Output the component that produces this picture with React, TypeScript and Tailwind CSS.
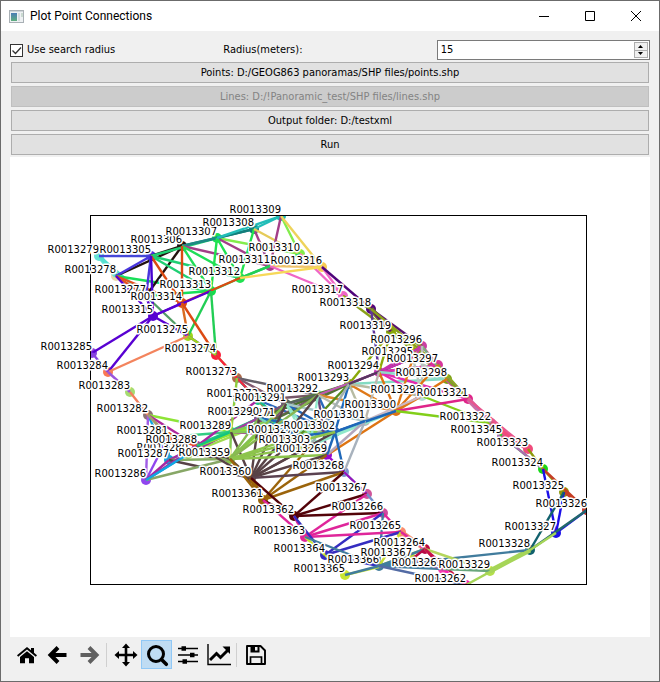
import { useState } from "react";
import type { ReactNode } from "react";

// id: [x, y, colour]
const points: Record<string, [number, number, string]> = {
  "262": [466, 585, "#fb1fb4"],
  "263": [443, 569, "#f73fb0"],
  "264": [425, 549, "#b80a45"],
  "265": [401, 532, "#f98a70"],
  "266": [383, 513, "#cf4a9e"],
  "267": [367, 494, "#cf559b"],
  "268": [344, 472, "#7a8fd0"],
  "269": [327, 455, "#9a09cf"],
  "270": [299, 436, "#1690dd"],
  "271": [275, 419, "#22c4a8"],
  "272": [258, 400, "#16c487"],
  "273": [237, 378, "#ad6b4b"],
  "274": [216, 355, "#fb1f3b"],
  "275": [188, 336, "#9ed61c"],
  "277": [146, 296, "#f26a3c"],
  "278": [116, 276, "#e6d9a8"],
  "279": [99, 256, "#67e3d6"],
  "280": [188, 454, "#a9d86a"],
  "281": [168, 437, "#e04a1b"],
  "282": [148, 415, "#8c7474"],
  "283": [130, 392, "#a5dc70"],
  "284": [108, 372, "#fa7954"],
  "285": [92, 353, "#8745e0"],
  "286": [146, 480, "#9046ee"],
  "287": [169, 460, "#11a6e2"],
  "288": [197, 446, "#b029a4"],
  "289": [231, 432, "#20ca86"],
  "290": [259, 418, "#7b5772"],
  "291": [286, 404, "#55635f"],
  "292": [318, 395, "#8ee8cc"],
  "293": [349, 384, "#73a317"],
  "294": [379, 372, "#c633b0"],
  "295": [413, 358, "#9fa8b0"],
  "296": [422, 346, "#cb3fa3"],
  "297": [438, 365, "#d8369b"],
  "298": [447, 379, "#7da018"],
  "299": [422, 396, "#b3ded6"],
  "300": [396, 411, "#de7412"],
  "301": [365, 421, "#b6b6b6"],
  "302": [335, 432, "#1e67b9"],
  "303": [310, 446, "#91e8cb"],
  "305": [151, 256, "#4936de"],
  "306": [182, 246, "#22110f"],
  "307": [217, 238, "#18df58"],
  "308": [254, 229, "#137e7b"],
  "309": [281, 216, "#22bdb8"],
  "310": [300, 254, "#83ed4c"],
  "311": [270, 266, "#a93f87"],
  "312": [240, 278, "#20e250"],
  "313": [211, 291, "#12df4b"],
  "314": [182, 303, "#dc4a12"],
  "315": [153, 316, "#5801d2"],
  "316": [322, 267, "#f6cb55"],
  "317": [343, 296, "#ef66c6"],
  "318": [371, 309, "#4f047b"],
  "319": [391, 332, "#8aa908"],
  "321": [468, 399, "#df2489"],
  "322": [491, 423, "#b37ab2"],
  "345": [502, 436, "#a96cb0"],
  "323": [528, 449, "#f04b7c"],
  "324": [543, 469, "#15d916"],
  "325": [564, 492, "#8e990b"],
  "326": [587, 510, "#c53c24"],
  "327": [556, 533, "#1b0fe8"],
  "328": [530, 550, "#11616d"],
  "329": [490, 571, "#b4df4c"],
  "359": [230, 459, "#89c64b"],
  "360": [251, 478, "#584246"],
  "361": [263, 500, "#9b640b"],
  "362": [294, 516, "#530309"],
  "363": [305, 537, "#df269a"],
  "364": [325, 555, "#352dc0"],
  "365": [345, 575, "#c9e632"],
  "366": [379, 566, "#417c9d"],
  "367": [412, 559, "#b9dc2d"],
};

// from, colour, destinations
const links: [string, string, string][] = [
  ["279", "#55dfd0", "278 277"],
  ["279", "#4547d8", "305"],
  ["278", "#22110f", "306"],
  ["278", "#4936de", "305"],
  ["278", "#18df58", "313"],
  ["278", "#e2521f", "277 314"],
  ["278", "#5801d2", "315"],
  ["277", "#22110f", "306"],
  ["277", "#4936de", "305"],
  ["277", "#18df58", "313"],
  ["277", "#519e66", "275"],
  ["277", "#5801d2", "315"],
  ["305", "#22110f", "306"],
  ["305", "#20cf73", "307 312 313"],
  ["305", "#dc4a12", "314"],
  ["305", "#4801d2", "315"],
  ["306", "#1d8a83", "307 308"],
  ["306", "#a33e88", "311"],
  ["306", "#20dd58", "312 313"],
  ["306", "#dc4a12", "314"],
  ["307", "#83ed4c", "310"],
  ["307", "#a33e88", "311"],
  ["307", "#20e250", "312 313"],
  ["307", "#137e7b", "308"],
  ["307", "#22bdb8", "309"],
  ["308", "#22bdb8", "309"],
  ["308", "#a33e88", "311"],
  ["308", "#20e250", "312"],
  ["308", "#e5cb59", "310"],
  ["309", "#83ed4c", "310"],
  ["309", "#a33e88", "311"],
  ["309", "#eed35a", "316"],
  ["310", "#20dd60", "312"],
  ["310", "#eed35a", "316"],
  ["310", "#ef66c6", "317"],
  ["311", "#22ce55", "312"],
  ["311", "#f0c36b", "316"],
  ["311", "#ef66c6", "317"],
  ["312", "#20dd60", "313"],
  ["312", "#f6d858", "316"],
  ["312", "#dc4a12", "314"],
  ["313", "#5801d2", "315"],
  ["313", "#22ce55", "275 274"],
  ["314", "#5801d2", "315"],
  ["314", "#d86b21", "275"],
  ["314", "#dc4a12", "274"],
  ["315", "#5801d2", "285 284 275"],
  ["316", "#ef66c6", "317"],
  ["316", "#4f047b", "318"],
  ["317", "#8aa119", "318 319"],
  ["318", "#58126f", "319 296"],
  ["318", "#60349b", "294"],
  ["318", "#8aa119", "297"],
  ["319", "#8aa908", "293 294 298 296 297"],
  ["275", "#6014c7", "274"],
  ["275", "#f3845d", "284"],
  ["275", "#9ed61c", "274"],
  ["274", "#87d52e", "273"],
  ["274", "#fb1f3b", "273"],
  ["285", "#8745e0", "284"],
  ["284", "#9a56dc", "283"],
  ["283", "#f37f5c", "282"],
  ["282", "#8ee436", "289"],
  ["282", "#af279d", "288"],
  ["282", "#11a6e2", "287"],
  ["282", "#a05ce5", "286"],
  ["282", "#a59b6d", "280 281"],
  ["281", "#31cd84", "289"],
  ["281", "#eb4925", "288"],
  ["281", "#1ba4d8", "287"],
  ["281", "#9046ee", "286"],
  ["280", "#a0db50", "271 289 359"],
  ["280", "#a727a2", "290"],
  ["280", "#11a6e2", "286"],
  ["280", "#584246", "359"],
  ["287", "#25ca80", "289"],
  ["287", "#a727a2", "288"],
  ["287", "#86ae62", "359"],
  ["287", "#584246", "360"],
  ["286", "#a727a2", "288 287"],
  ["286", "#87a766", "359"],
  ["286", "#11a6e2", "280"],
  ["288", "#25ca80", "289 290"],
  ["288", "#a727a2", "272"],
  ["288", "#93e52c", "271"],
  ["288", "#584246", "359 360"],
  ["289", "#13c57f", "290 291 288"],
  ["289", "#aa39a1", "270 291"],
  ["289", "#84cb54", "271 302 359"],
  ["289", "#584246", "360"],
  ["273", "#646069", "292"],
  ["273", "#825a70", "291"],
  ["273", "#18c68e", "272 271"],
  ["273", "#f32744", "272"],
  ["273", "#8fce3e", "289"],
  ["272", "#fa7030", "271"],
  ["272", "#2869bc", "302"],
  ["272", "#18ba88", "270"],
  ["272", "#755768", "292"],
  ["271", "#87d62f", "359"],
  ["271", "#1a83d1", "270 302"],
  ["271", "#7c5570", "291 292"],
  ["271", "#91e8cb", "303"],
  ["271", "#54703a", "293"],
  ["290", "#7c5572", "291 292"],
  ["290", "#49722b", "293"],
  ["290", "#1e67b9", "270 302"],
  ["290", "#86ba50", "359"],
  ["290", "#584246", "360"],
  ["290", "#75d2c0", "303"],
  ["291", "#4e842c", "293"],
  ["291", "#586361", "292"],
  ["291", "#1e67b9", "302"],
  ["291", "#a6c7c7", "301"],
  ["291", "#91e8cb", "303 269"],
  ["291", "#86c050", "359"],
  ["291", "#584246", "360"],
  ["292", "#4c7c20", "293"],
  ["292", "#bf5ab3", "294"],
  ["292", "#2869bc", "302"],
  ["292", "#694678", "269"],
  ["292", "#df8928", "300"],
  ["292", "#b7bbae", "301"],
  ["292", "#91e8cb", "303"],
  ["292", "#89b652", "359"],
  ["292", "#584246", "360"],
  ["293", "#9b32a0", "294 295"],
  ["293", "#83dbc2", "298"],
  ["293", "#df7918", "300"],
  ["293", "#b7bba2", "301 299"],
  ["293", "#1e67b9", "302"],
  ["293", "#598d20", "270"],
  ["293", "#a1afb1", "303"],
  ["293", "#56395e", "295"],
  ["294", "#c633b0", "295 296"],
  ["294", "#344f78", "297"],
  ["294", "#e22bae", "297 321 299"],
  ["294", "#8cdac8", "298"],
  ["294", "#de7412", "300"],
  ["294", "#bbb8ae", "301"],
  ["295", "#cb3fa3", "296"],
  ["295", "#df7918", "300"],
  ["295", "#b9c9c0", "299 298"],
  ["295", "#df2995", "297"],
  ["296", "#df2995", "297"],
  ["296", "#79ae7e", "298"],
  ["296", "#b9c0bd", "299"],
  ["297", "#8bac22", "298 321"],
  ["297", "#de7412", "300"],
  ["298", "#df2995", "321"],
  ["298", "#7ca71f", "321"],
  ["298", "#de7412", "300"],
  ["299", "#df7918", "300"],
  ["299", "#ccb8c4", "301"],
  ["299", "#82cf19", "322"],
  ["300", "#df2489", "321"],
  ["300", "#82cf19", "322"],
  ["300", "#bababa", "301 302"],
  ["300", "#91e8cb", "303"],
  ["300", "#de7412", "269"],
  ["300", "#1e67b9", "302"],
  ["301", "#a8b2bd", "268"],
  ["301", "#b3a5bc", "269"],
  ["301", "#91e8cb", "303"],
  ["301", "#1e67b9", "302"],
  ["302", "#1e67b9", "268 269 270"],
  ["302", "#91e8cb", "303"],
  ["302", "#584246", "360"],
  ["302", "#8dc44c", "359"],
  ["270", "#8dc44c", "359"],
  ["270", "#584246", "360"],
  ["270", "#69caa5", "303"],
  ["303", "#584246", "360"],
  ["303", "#8dc44c", "359"],
  ["303", "#9b640b", "361"],
  ["269", "#8dc44c", "359"],
  ["269", "#584246", "360"],
  ["269", "#9b640b", "361"],
  ["269", "#9a09cf", "268"],
  ["268", "#5b4250", "360"],
  ["268", "#9b640b", "361"],
  ["268", "#530309", "362"],
  ["268", "#81dfc3", "267"],
  ["268", "#9813be", "267"],
  ["359", "#6b4e33", "360"],
  ["359", "#9b640b", "361"],
  ["360", "#9b640b", "361"],
  ["360", "#530309", "362"],
  ["361", "#530309", "362"],
  ["361", "#df269a", "363"],
  ["267", "#530309", "362"],
  ["267", "#df269a", "363"],
  ["267", "#718ecb", "266"],
  ["266", "#530309", "362"],
  ["266", "#df269a", "363 265"],
  ["266", "#352dc0", "364"],
  ["266", "#417c9d", "366"],
  ["265", "#df269a", "363"],
  ["265", "#352dc0", "364"],
  ["265", "#c9df32", "366"],
  ["265", "#f48c72", "264"],
  ["265", "#df269a", "264"],
  ["362", "#df269a", "363"],
  ["362", "#352dc0", "364"],
  ["363", "#c9e632", "364"],
  ["363", "#417c9d", "366"],
  ["364", "#352dc0", "366"],
  ["364", "#c9e632", "365"],
  ["365", "#c9e632", "367"],
  ["365", "#417c9d", "366"],
  ["366", "#c9e632", "264"],
  ["366", "#417c9d", "367 264 263 328"],
  ["366", "#536ba4", "262"],
  ["367", "#b80a45", "264 263"],
  ["367", "#8c7bb6", "263"],
  ["264", "#f48c72", "263"],
  ["264", "#b80a45", "263"],
  ["264", "#b4d65c", "329"],
  ["264", "#c81249", "262"],
  ["263", "#fb1fb4", "262"],
  ["263", "#69a67c", "329"],
  ["321", "#b37ab2", "322"],
  ["321", "#e8568f", "323"],
  ["322", "#35c634", "345"],
  ["322", "#f04b7c", "323"],
  ["345", "#35c634", "324"],
  ["345", "#a96cb0", "324"],
  ["345", "#f04b7c", "323"],
  ["323", "#8e990b", "324"],
  ["324", "#8e990b", "325"],
  ["324", "#c53c24", "326"],
  ["324", "#1b0fe8", "327"],
  ["325", "#c53c24", "326"],
  ["325", "#1b0fe8", "327"],
  ["325", "#11616d", "328"],
  ["326", "#1b0fe8", "327"],
  ["326", "#22686c", "328"],
  ["328", "#a6d558", "329 327"],
  ["328", "#a6d558", "262"],
];

// short wide strips where both directions of a link run side by side
const strips: [string, string, string][] = [
  ["279", "278", "#67e3d6"],
  ["298", "321", "#c05a94"],
  ["321", "322", "#d569a3"],
  ["322", "323", "#f04b7c"],
  ["318", "319", "#74752a"],
  ["329", "328", "#a6d558"],
  ["265", "264", "#f48c72"],
  ["288", "289", "#25ca80"],
  ["360", "361", "#9b640b"],
];

function Plot() {
  const ids = Object.keys(points);
  return (
    <svg
      viewBox="10 157 640 480"
      className="block w-full bg-white font-['DejaVu_Sans',sans-serif] text-[10px]"
      role="img"
      aria-label="Point connections"
    >
      <defs>
        <clipPath id="axes">
          <rect x="90" y="215" width="496" height="369" />
        </clipPath>
      </defs>
      <g clipPath="url(#axes)">
        {ids.map((id) => (
          <circle key={id} cx={points[id][0]} cy={points[id][1]} r="5" fill={points[id][2]} />
        ))}
        {strips.map(([a, b, colour]) => (
          <line
            key={a + b}
            x1={points[a][0]}
            y1={points[a][1]}
            x2={points[b][0]}
            y2={points[b][1]}
            stroke={colour}
            strokeWidth="5"
          />
        ))}
        {links.flatMap(([from, colour, list], i) =>
          list.split(" ").map((to) => (
            <line
              key={i + to}
              x1={points[from][0]}
              y1={points[from][1]}
              x2={points[to][0]}
              y2={points[to][1]}
              stroke={colour}
              strokeWidth="2.4"
            />
          ))
        )}
      </g>
      <rect x="90.5" y="215.5" width="496" height="369" fill="none" stroke="#000" />
      <g fill="#000" stroke="#fff" strokeWidth="3" strokeLinejoin="round" textAnchor="end">
        {ids.map((id) => (
          <text key={id} x={points[id][0]} y={points[id][1] - 3} style={{ paintOrder: "stroke" }}>
            {"R0013" + id}
          </text>
        ))}
      </g>
    </svg>
  );
}

function ActionButton({ children, disabled }: { children: ReactNode; disabled?: boolean }) {
  return (
    <button
      disabled={disabled}
      className="mx-px h-[21px] border border-[#adadad] bg-[#e1e1e1] leading-[19px] disabled:border-[#bfbfbf] disabled:bg-[#cccccc] disabled:text-[#838383]"
    >
      {children}
    </button>
  );
}

function Tool({ label, children, active }: { label: string; children: ReactNode; active?: boolean }) {
  return (
    <button
      aria-label={label}
      className={
        active
          ? "flex h-[29px] w-[31px] items-center justify-center border border-[#90c8f6] bg-[#bfdcf3]"
          : "flex h-[29px] w-[31px] items-center justify-center"
      }
    >
      <svg viewBox="0 0 24 24" className="size-6" fill="none" stroke="#000">
        {children}
      </svg>
    </button>
  );
}

export default function App() {
  const [radius, setRadius] = useState(15);
  const [search, setSearch] = useState(true);
  return (
    <main className="flex min-h-screen flex-col border border-[#6b6b6b] bg-[#f0f0f0] font-['DejaVu_Sans_Condensed','DejaVu_Sans',sans-serif] text-[11px] text-black">
      <header className="flex h-[30px] items-center bg-white pl-2">
        <svg viewBox="0 0 15 13" className="h-[13px] w-[15px]">
          <defs>
            <linearGradient id="app" x2="0" y2="1">
              <stop stopColor="#4c7db5" />
              <stop offset="1" stopColor="#5fae7e" />
            </linearGradient>
          </defs>
          <rect x=".5" y=".5" width="14" height="12" fill="#eef1f3" stroke="#a9b0b5" />
          <rect x="1" y="1" width="13" height="1" fill="#cfd5d9" />
          <rect x="2" y="3" width="6" height="8" fill="url(#app)" />
          <rect x="9" y="3" width="2" height="8" fill="#d5dcdf" />
          <rect x="12" y="3" width="2" height="4" fill="#c9d9d0" />
        </svg>
        <h1 className="ml-1.5 flex-1 font-[Roboto,sans-serif] text-[12px]">Plot Point Connections</h1>
        <button aria-label="Minimize" className="flex h-full w-[46px] items-center justify-center">
          <svg viewBox="0 0 10 10" className="size-2.5" stroke="#000">
            <path d="M0 5.5h10" />
          </svg>
        </button>
        <button aria-label="Maximize" className="flex h-full w-[46px] items-center justify-center">
          <svg viewBox="0 0 10 10" className="size-2.5" fill="none" stroke="#000">
            <path d="M.5.5h9v9h-9z" />
          </svg>
        </button>
        <button aria-label="Close" className="flex h-full w-[46px] items-center justify-center">
          <svg viewBox="0 0 10 10" className="size-2.5" stroke="#000">
            <path d="M0 0l10 10M10 0L0 10" />
          </svg>
        </button>
      </header>

      <div className="flex flex-col px-[9px] pt-[9px]">
        <div className="mb-0.5 grid grid-cols-3 items-center">
          <label className="flex items-center gap-1">
            <input
              type="checkbox"
              checked={search}
              onChange={(e) => setSearch(e.target.checked)}
              className="peer sr-only"
            />
            <svg
              viewBox="0 0 13 13"
              className="size-[13px] bg-white [&>path]:opacity-0 peer-checked:[&>path]:opacity-100"
              fill="none"
              stroke="#333"
            >
              <rect x=".5" y=".5" width="12" height="12" />
              <path d="M2.5 6.5l3 3L11 3.5" strokeWidth="1.3" />
            </svg>
            Use search radius
          </label>
          <label htmlFor="radius">Radius(meters):</label>
          <div className="flex h-5 border border-[#7a7a7a] bg-white p-px">
            <input
              id="radius"
              type="number"
              value={radius}
              onChange={(e) => setRadius(Number(e.target.value))}
              className="min-w-0 flex-1 px-0.5 outline-none [appearance:textfield] [&::-webkit-inner-spin-button]:appearance-none"
            />
            <div className="flex w-[14px] flex-col border border-[#adadad] bg-[#f0f0f0]">
              <button
                aria-label="Increase"
                onClick={() => setRadius(radius + 1)}
                className="flex flex-1 items-center justify-center border-b border-[#adadad]"
              >
                <svg viewBox="0 0 5 3" className="h-[3px] w-[5px]">
                  <path d="M0 3L2.5 0 5 3z" />
                </svg>
              </button>
              <button
                aria-label="Decrease"
                onClick={() => setRadius(radius - 1)}
                className="flex flex-1 items-center justify-center"
              >
                <svg viewBox="0 0 5 3" className="h-[3px] w-[5px]">
                  <path d="M0 0l2.5 3L5 0z" />
                </svg>
              </button>
            </div>
          </div>
        </div>
        <div className="mb-0.5 flex flex-col gap-[3px]">
          <ActionButton>Points: D:/GEOG863 panoramas/SHP files/points.shp</ActionButton>
          <ActionButton disabled>Lines: D:/!Panoramic_test/SHP files/lines.shp</ActionButton>
          <ActionButton>Output folder: D:/testxml</ActionButton>
          <ActionButton>Run</ActionButton>
        </div>
        <Plot />
      </div>

      <nav className="flex items-center px-[10px] pt-[3px]">
        <Tool label="Home">
          <g transform="translate(0 1)" fill="#000" stroke="none">
            <path d="M12 7.2L5 13v6.2h5v-5h4v5h5V13z" />
            <path d="M12 3L2 11.3l1.2 1.4L12 5.5l8.800 7.2 1.2-1.4-3-2.500V4h-3v2.300z" />
          </g>
        </Tool>
        <Tool label="Back">
          <path d="M20.5 12H6M12 4.5L4.5 12l7.5 7.5" strokeWidth="4" />
        </Tool>
        <Tool label="Forward">
          <path d="M3.5 12H18M12 4.5l7.5 7.5-7.5 7.5" strokeWidth="4" stroke="#606060" />
        </Tool>
        <span className="mr-[3px] ml-0.5 h-6 w-px bg-[#d0d0d0]" />
        <Tool label="Pan">
          <path d="M12 4v16M4 12h16" strokeWidth="2.6" />
          <path
            d="M12 .5l4 4.500H8zM12 23.500l4-4.500H8zM.5 12L5 8v8zM23.500 12L19 8v8z"
            fill="#000"
            stroke="none"
          />
        </Tool>
        <Tool label="Zoom" active>
          <circle cx="11" cy="11" r="7.5" strokeWidth="3" />
          <path d="M16.5 16.5l4.800 4.800" strokeWidth="3.6" strokeLinecap="round" />
        </Tool>
        <Tool label="Configure subplots">
          <path d="M2 5.5h20M2 12h20M2 18.5h20" strokeWidth="1.7" />
          <path d="M5.5 5.5h4.500M14 12h4.500M6.500 18.500H11" strokeWidth="4.5" />
        </Tool>
        <Tool label="Edit axes">
          <path d="M1 1v20.500h23" strokeWidth="1.4" />
          <path d="M3 17l6.500-6.500 4 4L21 7" strokeWidth="3" />
          <path d="M15.500 3.500H23V11z" fill="#000" stroke="none" />
        </Tool>
        <span className="mr-[3px] ml-0.5 h-6 w-px bg-[#d0d0d0]" />
        <Tool label="Save">
          <path d="M3 3h13.500L21 7.500V21H3z" strokeWidth="1.9" strokeLinejoin="round" />
          <path d="M6.500 21v-7h11v7" strokeWidth="1.7" />
          <path d="M6.500 3v6.500h9V3h-2v4.500H11V3z" fill="#000" stroke="none" />
        </Tool>
      </nav>
    </main>
  );
}
